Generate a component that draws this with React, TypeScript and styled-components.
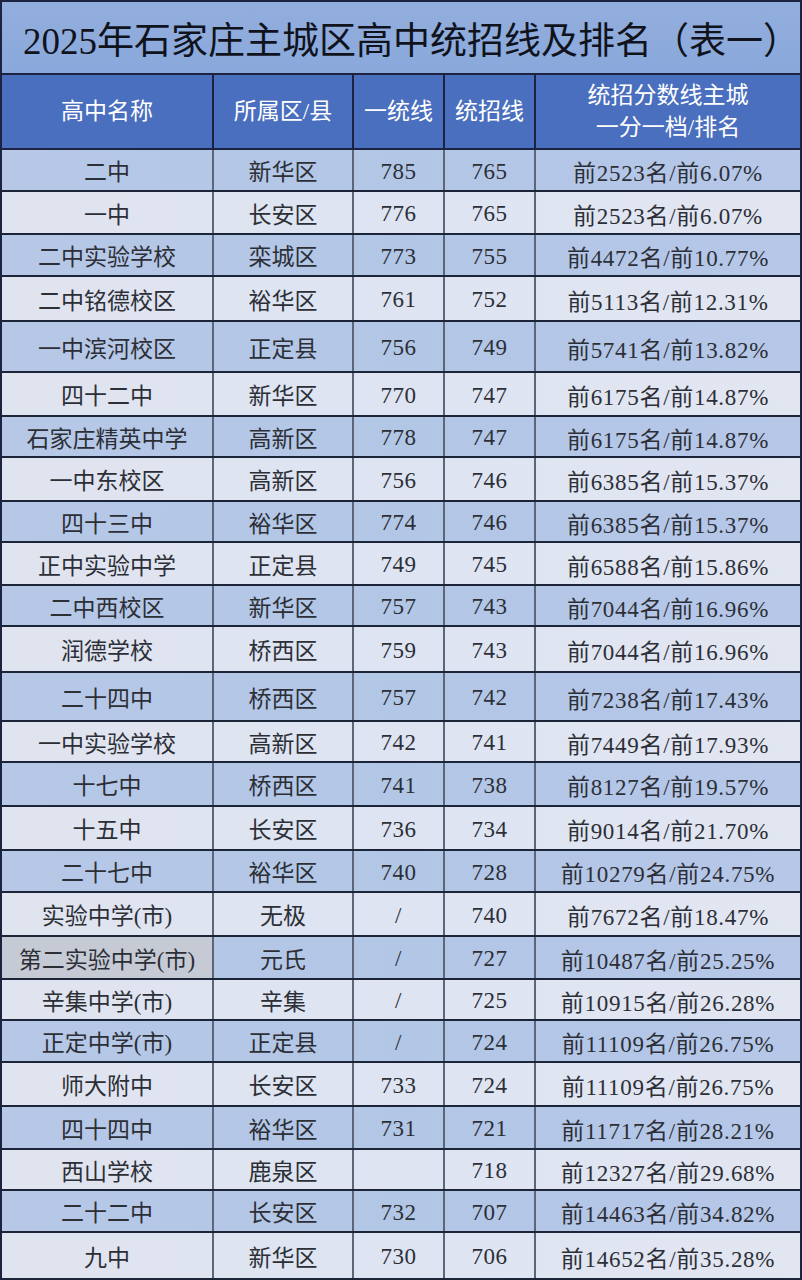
import React from "react";
import styled, { createGlobalStyle } from "styled-components";

type School = {
  name: string;
  district: string;
  first: string;
  line: string;
  rank: string;
  h: number;
};

const rows: School[] = [
  { name: "二中", district: "新华区", first: "785", line: "765", rank: "前2523名/前6.07%", h: 42 },
  { name: "一中", district: "长安区", first: "776", line: "765", rank: "前2523名/前6.07%", h: 43 },
  { name: "二中实验学校", district: "栾城区", first: "773", line: "755", rank: "前4472名/前10.77%", h: 42 },
  { name: "二中铭德校区", district: "裕华区", first: "761", line: "752", rank: "前5113名/前12.31%", h: 45 },
  { name: "一中滨河校区", district: "正定县", first: "756", line: "749", rank: "前5741名/前13.82%", h: 51 },
  { name: "四十二中", district: "新华区", first: "770", line: "747", rank: "前6175名/前14.87%", h: 44 },
  { name: "石家庄精英中学", district: "高新区", first: "778", line: "747", rank: "前6175名/前14.87%", h: 41 },
  { name: "一中东校区", district: "高新区", first: "756", line: "746", rank: "前6385名/前15.37%", h: 44 },
  { name: "四十三中", district: "裕华区", first: "774", line: "746", rank: "前6385名/前15.37%", h: 41 },
  { name: "正中实验中学", district: "正定县", first: "749", line: "745", rank: "前6588名/前15.86%", h: 43 },
  { name: "二中西校区", district: "新华区", first: "757", line: "743", rank: "前7044名/前16.96%", h: 41 },
  { name: "润德学校", district: "桥西区", first: "759", line: "743", rank: "前7044名/前16.96%", h: 46 },
  { name: "二十四中", district: "桥西区", first: "757", line: "742", rank: "前7238名/前17.43%", h: 49 },
  { name: "一中实验学校", district: "高新区", first: "742", line: "741", rank: "前7449名/前17.93%", h: 41 },
  { name: "十七中", district: "桥西区", first: "741", line: "738", rank: "前8127名/前19.57%", h: 44 },
  { name: "十五中", district: "长安区", first: "736", line: "734", rank: "前9014名/前21.70%", h: 44 },
  { name: "二十七中", district: "裕华区", first: "740", line: "728", rank: "前10279名/前24.75%", h: 42 },
  { name: "实验中学(市)", district: "无极", first: "/", line: "740", rank: "前7672名/前18.47%", h: 44 },
  { name: "第二实验中学(市)", district: "元氏", first: "/", line: "727", rank: "前10487名/前25.25%", h: 43 },
  { name: "辛集中学(市)", district: "辛集", first: "/", line: "725", rank: "前10915名/前26.28%", h: 41 },
  { name: "正定中学(市)", district: "正定县", first: "/", line: "724", rank: "前11109名/前26.75%", h: 42 },
  { name: "师大附中", district: "长安区", first: "733", line: "724", rank: "前11109名/前26.75%", h: 44 },
  { name: "四十四中", district: "裕华区", first: "731", line: "721", rank: "前11717名/前28.21%", h: 43 },
  { name: "西山学校", district: "鹿泉区", first: "", line: "718", rank: "前12327名/前29.68%", h: 41 },
  { name: "二十二中", district: "长安区", first: "732", line: "707", rank: "前14463名/前34.82%", h: 42 },
  { name: "九中", district: "新华区", first: "730", line: "706", rank: "前14652名/前35.28%", h: 47 },
];

export default function App() {
  return (
    <>
      <GlobalStyle />
      <Sheet>
        <Title>2025年石家庄主城区高中统招线及排名（表一）</Title>
        <HeaderRow>
          <HeadCell>高中名称</HeadCell>
          <HeadCell>所属区/县</HeadCell>
          <HeadCell>一统线</HeadCell>
          <HeadCell>统招线</HeadCell>
          <HeadCell $last>
            <span>统招分数线主城</span>
            <span>一分一档/排名</span>
          </HeadCell>
        </HeaderRow>
        {rows.map((r, i) => (
          <Row key={r.name} $h={r.h} $dark={i % 2 === 0}>
            <Cell $tone={r.name === "第二实验中学(市)" ? "gray" : undefined}>{r.name}</Cell>
            <Cell>{r.district}</Cell>
            <NumCell>{r.first}</NumCell>
            <NumCell>{r.line}</NumCell>
            <RankCell>{r.rank}</RankCell>
          </Row>
        ))}
      </Sheet>
    </>
  );
}

const GlobalStyle = createGlobalStyle`
  body {
    margin: 0;
    background: #ffffff;
    font-family: "Liberation Serif", "Noto Sans CJK SC", serif;
  }
`;

const Sheet = styled.div`
  width: 802px;
  height: 1280px;
  overflow: hidden;
  box-sizing: border-box;
  border: 2px solid #1b2340;
  border-bottom: none;
  display: flex;
  flex-direction: column;
`;

const Title = styled.div`
  height: 73px;
  flex: none;
  display: flex;
  align-items: center;
  padding-left: 21px;
  background: linear-gradient(180deg, #92aedd 0%, #8aa8db 100%);
  border-bottom: 2px solid #1b2340;
  color: #10131c;
  font-size: 37px;
  box-sizing: border-box;
`;

const grid = `
  display: grid;
  grid-template-columns: 212px 140px 91px 91px 1fr;
  flex: none;
  box-sizing: border-box;
`;

const HeaderRow = styled.div`
  ${grid};
  height: 75px;
  background: #4a6fbe;
  border-bottom: 2px solid #1b2340;
`;

const HeadCell = styled.div<{ $last?: boolean }>`
  display: flex;
  flex-direction: column;
  align-items: center;
  justify-content: center;
  gap: 4px;
  color: #ffffff;
  font-size: 23px;
  line-height: 1.2;
  border-right: ${({ $last }) => ($last ? "none" : "2px solid #1b2340")};
`;

const Row = styled.div<{ $h: number; $dark: boolean }>`
  ${grid};
  height: ${({ $h }) => $h}px;
  background: ${({ $dark }) =>
    $dark
      ? "linear-gradient(90deg, #b7c8e7 0%, #b2c6e6 50%, #b6c7e8 100%)"
      : "linear-gradient(90deg, #e0e4ef 0%, #dee4f2 50%, #e2e6f1 100%)"};
  border-bottom: 2px solid #1c2437;
`;

const Cell = styled.div<{ $tone?: string }>`
  display: flex;
  align-items: center;
  justify-content: center;
  white-space: nowrap;
  font-size: 23px;
  color: #2c2f36;
  background: ${({ $tone }) => ($tone === "gray" ? "#c5cad5" : "transparent")};
  border-right: 2px solid #5d6679;
`;

const NumCell = styled(Cell)`
  padding-top: 3px;
  letter-spacing: 0.5px;
`;

const RankCell = styled(Cell)`
  border-right: none;
  letter-spacing: 0.7px;
  padding-top: 2px;
`;
